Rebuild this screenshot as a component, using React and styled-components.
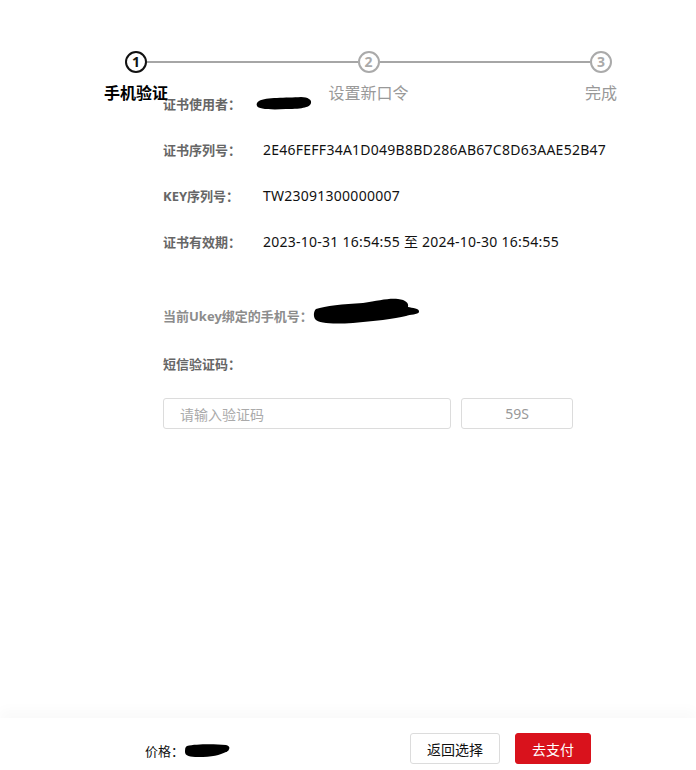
import styled, { createGlobalStyle } from "styled-components";

const GlobalStyle = createGlobalStyle`
  html, body {
    margin: 0;
    padding: 0;
    background: #fff;
    font-family: "Noto Sans", "Noto Sans CJK SC", sans-serif;
  }
`;

const steps = ["手机验证", "设置新口令", "完成"];

const rows = [
  { label: "证书使用者：", blot: true },
  { label: "证书序列号：", value: "2E46FEFF34A1D049B8BD286AB67C8D63AAE52B47" },
  { label: "KEY序列号：", value: "TW23091300000007" },
  { label: "证书有效期：", value: "2023-10-31 16:54:55 至 2024-10-30 16:54:55" },
];

const Blot = ({ w, h, d }) => (
  <svg width={w} height={h} viewBox={`0 0 ${w} ${h}`}>
    <path d={d} fill="#000" />
  </svg>
);

const App = () => {
  return (
    <Page>
      <GlobalStyle />
      <Main>
        <Stepper>
          {steps.map((s, i) => (
            <StepGroup key={s} $last={i === steps.length - 1}>
              <Step>
                <Circle $active={i === 0}>{i + 1}</Circle>
                <StepLabel $active={i === 0}>{s}</StepLabel>
              </Step>
              {i < steps.length - 1 && <Line />}
            </StepGroup>
          ))}
        </Stepper>

        <Info>
          {rows.map((r) => (
            <Row key={r.label}>
              <Label>{r.label}</Label>
              {r.blot ? (
                <UserBlot>
                  <Blot
                    w={56}
                    h={14}
                    d="M3 5 C10 1 30 2 45 1 C52 1 56 4 55 7 C54 11 48 13 30 13 C14 14 2 13 1 10 C0 8 1 6 3 5 Z"
                  />
                </UserBlot>
              ) : (
                <Value>{r.value}</Value>
              )}
            </Row>
          ))}
        </Info>

        <Phone>
          <Label $tone="light">当前Ukey绑定的手机号：</Label>
          <PhoneBlot>
            <Blot
              w={107}
              h={28}
              d="M3 12 C12 9 30 7 50 6 C65 4 75 1 85 2 C93 3 96 6 95 10 C99 11 107 11 106 15 C105 18 97 17 93 19 C82 22 60 24 40 26 C22 27 6 27 2 22 C0 18 1 14 3 12 Z"
            />
          </PhoneBlot>
        </Phone>

        <CodeTitle>
          <Label>短信验证码：</Label>
        </CodeTitle>

        <CodeRow>
          <CodeInput placeholder="请输入验证码" />
          <CountButton>59S</CountButton>
        </CodeRow>
      </Main>

      <Footer>
        <Price>
          价格：
          <Blot
            w={46}
            h={15}
            d="M3 3 C12 1 30 1 42 2 C47 3 46 7 42 9 C36 12 28 14 14 14 C6 14 1 13 1 9 C1 6 1 4 3 3 Z"
          />
        </Price>
        <Actions>
          <Button>返回选择</Button>
          <Button $primary>去支付</Button>
        </Actions>
      </Footer>
    </Page>
  );
};

const Page = styled.div`
  min-height: 100vh;
  display: flex;
  flex-direction: column;
`;

const Main = styled.div`
  flex: 1;
  display: flex;
  flex-direction: column;
  padding-top: 51px;
`;

const Stepper = styled.div`
  display: flex;
  margin: 0 84px 0 125px;
`;

const StepGroup = styled.div`
  display: flex;
  align-items: center;
  flex: ${(p) => (p.$last ? "0 0 auto" : "1")};
`;

const Step = styled.div`
  position: relative;
  width: 22px;
  height: 22px;
`;

const Circle = styled.div`
  box-sizing: border-box;
  width: 22px;
  height: 22px;
  border-radius: 50%;
  border: 2px solid ${(p) => (p.$active ? "#111" : "#aaa")};
  color: ${(p) => (p.$active ? "#111" : "#aaa")};
  font-size: 14px;
  font-weight: 700;
  line-height: 18px;
  text-align: center;
`;

const StepLabel = styled.div`
  position: absolute;
  top: 31px;
  left: 50%;
  transform: translateX(-50%);
  white-space: nowrap;
  font-size: 16px;
  line-height: 22px;
  color: ${(p) => (p.$active ? "#000" : "#999")};
  font-weight: ${(p) => (p.$active ? 600 : 400)};
`;

const Line = styled.div`
  flex: 1;
  height: 2px;
  background: #a6a6a6;
`;

const Info = styled.div`
  display: flex;
  flex-direction: column;
  padding-left: 163px;
  margin-top: 7px;
`;

const Row = styled.div`
  display: flex;
  align-items: center;
  height: 46px;
`;

const Label = styled.span`
  display: inline-block;
  min-width: 100px;
  font-size: 13px;
  font-weight: 700;
  color: ${(p) => (p.$tone === "light" ? "#8c8c8c" : "#666")};
`;

const Value = styled.span`
  font-size: 14px;
  letter-spacing: 0.25px;
  color: #111;
`;

const UserBlot = styled.span`
  display: flex;
  margin-left: -7px;
  margin-top: -1px;
`;

const Phone = styled.div`
  display: flex;
  align-items: center;
  padding-left: 163px;
  margin-top: 28px;
  height: 46px;
`;

const PhoneBlot = styled.span`
  display: flex;
  margin-top: -8px;
`;

const CodeTitle = styled.div`
  display: flex;
  align-items: center;
  padding-left: 163px;
  margin-top: 2px;
  height: 46px;
`;

const CodeRow = styled.div`
  display: flex;
  gap: 10px;
  padding-left: 163px;
  margin-top: 12px;
`;

const CodeInput = styled.input`
  box-sizing: border-box;
  width: 288px;
  height: 31px;
  border: 1px solid #dcdcdc;
  border-radius: 3px;
  padding: 0 16px;
  font-family: "Noto Sans CJK SC", sans-serif;
  font-size: 14px;
  color: #333;
  outline: none;

  &::placeholder {
    color: #aaa;
  }
`;

const CountButton = styled.div`
  box-sizing: border-box;
  width: 112px;
  height: 31px;
  border: 1px solid #dcdcdc;
  border-radius: 3px;
  font-size: 14px;
  color: #999;
  line-height: 29px;
  text-align: center;
`;

const Footer = styled.div`
  display: flex;
  align-items: center;
  justify-content: space-between;
  height: 52px;
  box-sizing: border-box;
  padding: 15px 105px 6px 145px;
  background: #fff;
  box-shadow: 0 -8px 12px rgba(0, 0, 0, 0.025);
`;

const Price = styled.div`
  display: flex;
  align-items: center;
  font-size: 13px;
  color: #111;
  margin-top: 4px;
`;

const Actions = styled.div`
  display: flex;
  gap: 15px;
`;

const Button = styled.button`
  box-sizing: border-box;
  height: 31px;
  padding: 0 16px;
  min-width: ${(p) => (p.$primary ? "75px" : "89px")};
  border-radius: 3px;
  border: 1px solid ${(p) => (p.$primary ? "#d9121c" : "#dcdcdc")};
  background: ${(p) => (p.$primary ? "#d9121c" : "#fff")};
  color: ${(p) => (p.$primary ? "#fff" : "#111")};
  font-family: "Noto Sans CJK SC", sans-serif;
  font-size: 14px;
  cursor: pointer;
`;

export default App;
